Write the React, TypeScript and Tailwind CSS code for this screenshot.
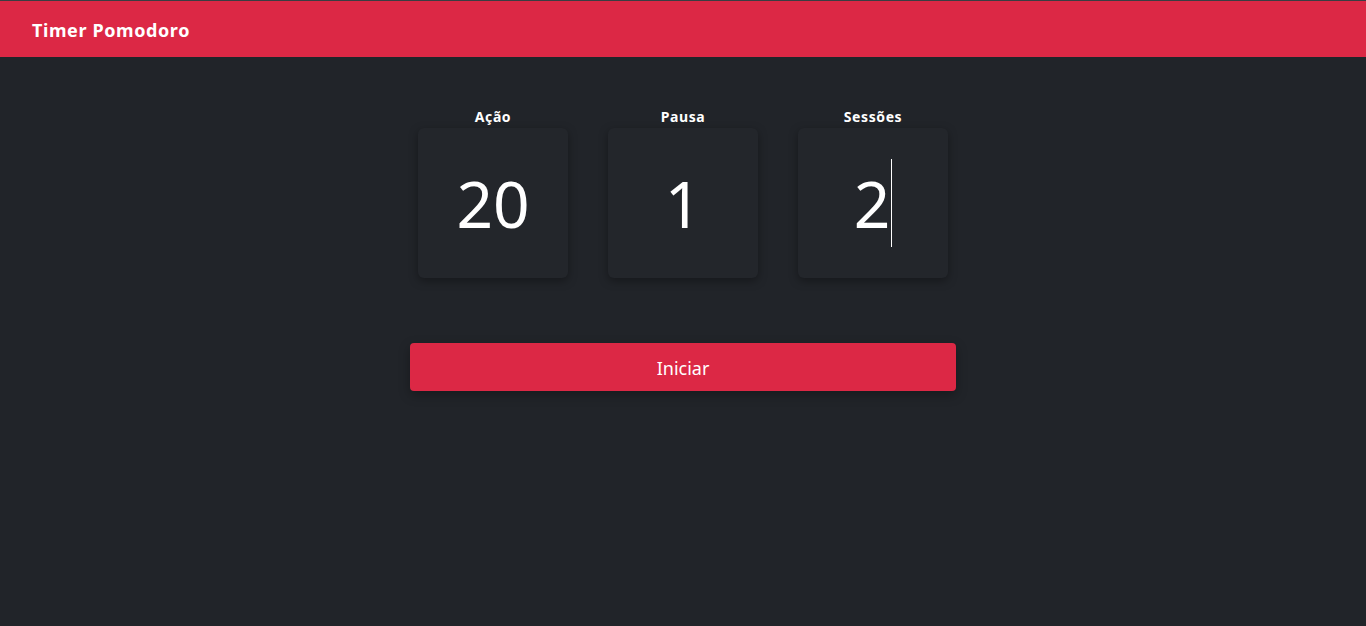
import React from 'react';

const fields = [
    { label: 'Ação', value: '20' },
    { label: 'Pausa', value: '1' },
    { label: 'Sessões', value: '2', focused: true },
];

const App: React.FC = () => {
    return (
        <div className="min-h-[626px] bg-[#212429] text-white" style={{ fontFamily: '"Noto Sans", "Open Sans", sans-serif' }}>
            <header className="border-t border-[#3a3d42] bg-[#dc2845] h-[57px] flex items-center px-8">
                <h1 className="text-[18px] font-bold tracking-[0.6px] pt-[2px]">Timer Pomodoro</h1>
            </header>

            <main className="flex flex-col items-center pt-[49px]">
                <div className="flex gap-10">
                    {fields.map(field => (
                        <div key={field.label} className="flex flex-col items-center">
                            <span className="text-[14px] font-bold leading-[22px] tracking-[0.6px]">{field.label}</span>
                            <div className="w-[150px] h-[150px] rounded-md bg-[#23262b] shadow-[0_3px_10px_rgba(0,0,0,0.35)] flex items-center justify-center">
                                <span className="text-[64px] leading-none font-normal pt-[2px]">{field.value}</span>
                                {field.focused && <span className="w-px h-[88px] bg-white ml-[1px]" />}
                            </div>
                        </div>
                    ))}
                </div>

                <button className="mt-[65px] w-[546px] h-[48px] rounded bg-[#dc2845] text-[18px] pt-[3px] shadow-[0_4px_12px_rgba(0,0,0,0.3)]">
                    Iniciar
                </button>
            </main>
        </div>
    );
};

export default App;
